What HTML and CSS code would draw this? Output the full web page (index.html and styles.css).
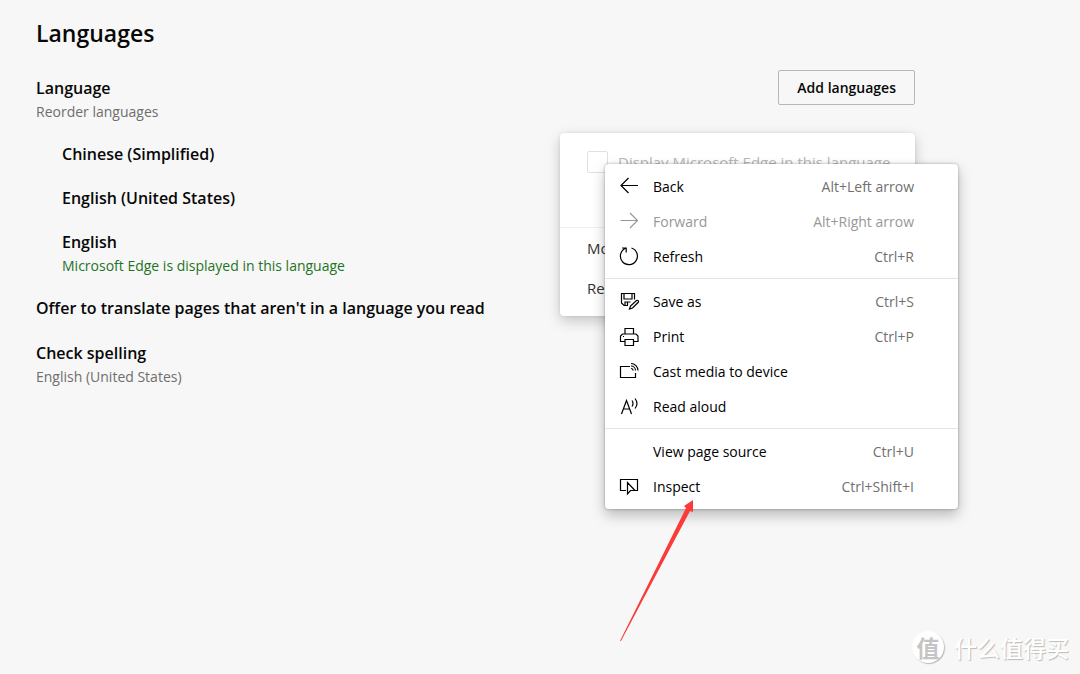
FILE: index.html
```html
<!DOCTYPE html>
<html lang="en">
<head>
<meta charset="utf-8">
<title>Languages</title>
<link rel="stylesheet" href="styles.css">
</head>
<body>
<main class="page">
  <h1 class="title">Languages</h1>
  <section class="intro">
    <div>
      <h2 class="heading">Language</h2>
      <p class="note">Reorder languages</p>
    </div>
    <button class="add" type="button">Add languages</button>
  </section>
  <ul class="languages">
    <li><h3 class="heading">Chinese (Simplified)</h3></li>
    <li><h3 class="heading">English (United States)</h3></li>
    <li><h3 class="heading">English</h3><p class="note active">Microsoft Edge is displayed in this language</p></li>
  </ul>
  <h2 class="heading translate">Offer to translate pages that aren't in a language you read</h2>
  <h2 class="heading">Check spelling</h2>
  <p class="note">English (United States)</p>
</main>

<div class="options">
  <label class="option display"><input class="check" type="checkbox" disabled><span>Display Microsoft Edge in this language</span></label>
  <button class="option" type="button">Move up</button>
  <button class="option" type="button">Remove</button>
</div>

<div class="menu" role="menu">
  <div class="group">
    <button class="item" type="button" role="menuitem"><svg class="icon" viewBox="0 0 20 20"><path d="M19 8.500H2M9.500 1 2 8.500l7.500 7.500"/></svg><span>Back</span><kbd>Alt+Left arrow</kbd></button>
    <button class="item off" type="button" role="menuitem" disabled><svg class="icon" viewBox="0 0 20 20"><path d="M1.500 8.500h17M11 1l7.500 7.500L11 16"/></svg><span>Forward</span><kbd>Alt+Right arrow</kbd></button>
    <button class="item" type="button" role="menuitem"><svg class="icon" viewBox="0 0 20 20"><path d="M12.500 1a8.500 8.500 0 1 1-6 .3M3 1h4.200v4.500"/></svg><span>Refresh</span><kbd>Ctrl+R</kbd></button>
  </div>
  <div class="group">
    <button class="item" type="button" role="menuitem"><svg class="icon" viewBox="0 0 20 20"><path d="M9 13.500H5L2.500 11V1.500h13v6M5 1.500V7h8V1.500M6 13.500V10h5.500M8.500 10v3M10.500 17l1-3 6-5.500a1.300 1.300 0 0 1 1.800 1.800L13.500 16z"/></svg><span>Save as</span><kbd>Ctrl+S</kbd></button>
    <button class="item" type="button" role="menuitem"><svg class="icon" viewBox="0 0 20 20"><path d="M6 7V1.500h8.500V7M6 14.500H1.500V9l2-2h13.500l2 2v5.500h-4.500M6 12.500h8.500v6H6zM4 9.500h1"/></svg><span>Print</span><kbd>Ctrl+P</kbd></button>
    <button class="item" type="button" role="menuitem"><svg class="icon" viewBox="0 0 20 20"><path d="M11 4.500H1.500v11h15V11M12 1.500a7 7 0 0 1 7 7M12 4A4.500 4.500 0 0 1 16.500 8.500M12 6.500a2 2 0 0 1 2 2"/></svg><span>Cast media to device</span></button>
    <button class="item" type="button" role="menuitem"><svg class="icon" viewBox="0 0 20 20"><path d="M2.500 17 7.500 3.500l5 13.500M4.300 12h6.400M13 3.500q2 3 0 6M16 1.500q4 5 0 10"/></svg><span>Read aloud</span></button>
  </div>
  <div class="group">
    <button class="item" type="button" role="menuitem"><span class="icon"></span><span>View page source</span><kbd>Ctrl+U</kbd></button>
    <button class="item" type="button" role="menuitem"><svg class="icon" viewBox="0 0 20 20"><path d="M7 13.500H1.500v-11h17v11H16M8.500 5.500v11.500l3-3.500h4.500z"/></svg><span>Inspect</span><kbd>Ctrl+Shift+I</kbd></button>
  </div>
</div>

<svg class="pointer" viewBox="0 0 74 141"><path d="M0 141 66 8l-2-2 9-6v12l-3-1L1 141z"/></svg>

<div class="watermark" lang="zh-CN"><span class="seal">值</span><span>什么值得买</span></div>
</body>
</html>
```
FILE: styles.css
```css
* { box-sizing: border-box; }
body {
  margin: 0;
  min-height: 100vh;
  background: #f7f7f7;
  color: #080808;
  font: 14px/20px "Open Sans", "Noto Sans", sans-serif;
}
button { font: inherit; color: inherit; background: none; border: 0; padding: 0; text-align: left; }
h1, h2, h3, p, ul { margin: 0; padding: 0; }
ul { list-style: none; }
.page { max-width: 915px; padding: 17px 0 0 36px; }
.title { font-size: 23px; line-height: 32px; font-weight: 600; }
.intro { display: flex; justify-content: space-between; align-items: flex-start; margin-top: 21px; }
.intro > div { padding-top: 6px; }
.heading { font-size: 16px; line-height: 24px; font-weight: 600; }
.note { font-size: 14px; line-height: 24px; color: #6e6e6e; }
.active { color: #1f731f; }
.add { height: 35px; padding: 0 18px; border: 1px solid #b8b8b8; border-radius: 2px; font-weight: 600; }
.languages { display: grid; gap: 20px; padding: 18px 0 18px 26px; }
.translate { margin-bottom: 21px; }

.options {
  position: absolute; left: 560px; top: 133px; width: 355px;
  padding-bottom: 8px; background: #fff; border-radius: 4px;
  box-shadow: 0 5px 14px rgba(0, 0, 0, .2), 0 0 3px rgba(0, 0, 0, .1);
}
.option { display: block; width: 100%; height: 40px; padding-left: 27px; font-size: 15px; color: #333; }
.display { display: flex; gap: 10px; height: 95px; padding-top: 18px; border-bottom: 1px solid #f0f0f0; line-height: 22px; color: #b8b8b8; }
.check { appearance: none; width: 21px; height: 22px; margin: 0; border: 1px solid #e0e0e0; border-radius: 2px; }

.menu {
  position: absolute; left: 605px; top: 164px; width: 353px;
  padding: 5px 0; background: #fff; border-radius: 4px; color: #000;
  box-shadow: 0 6px 14px rgba(0, 0, 0, .26), 0 0 3px rgba(0, 0, 0, .3);
}
.group + .group { margin-top: 4px; padding-top: 5px; border-top: 1px solid #e4e4e4; }
.item { display: flex; align-items: center; width: 100%; height: 35px; padding: 0 44px 0 14px; }
.icon { width: 20px; height: 20px; margin-right: 14px; fill: none; stroke: currentColor; stroke-width: 1.2; }
.item kbd { margin-left: auto; font: inherit; color: #707070; }
.item.off, .off kbd { color: #979797; }

.pointer { position: absolute; left: 620px; top: 500px; width: 74px; height: 141px; fill: #fb3a3a; }
.watermark {
  position: absolute; right: 11px; bottom: 11px; display: flex; align-items: center; gap: 10px;
  color: #fff; font: 500 23px/32px "Noto Sans CJK SC", sans-serif; text-shadow: 1px 1px 1px #bbb;
}
.seal {
  width: 32px; height: 32px; border-radius: 50%; background: #fff; color: #c4c4c4;
  font-weight: 700; line-height: 32px; text-align: center; text-shadow: none; box-shadow: 1px 1px 1px #bbb;
}
```
